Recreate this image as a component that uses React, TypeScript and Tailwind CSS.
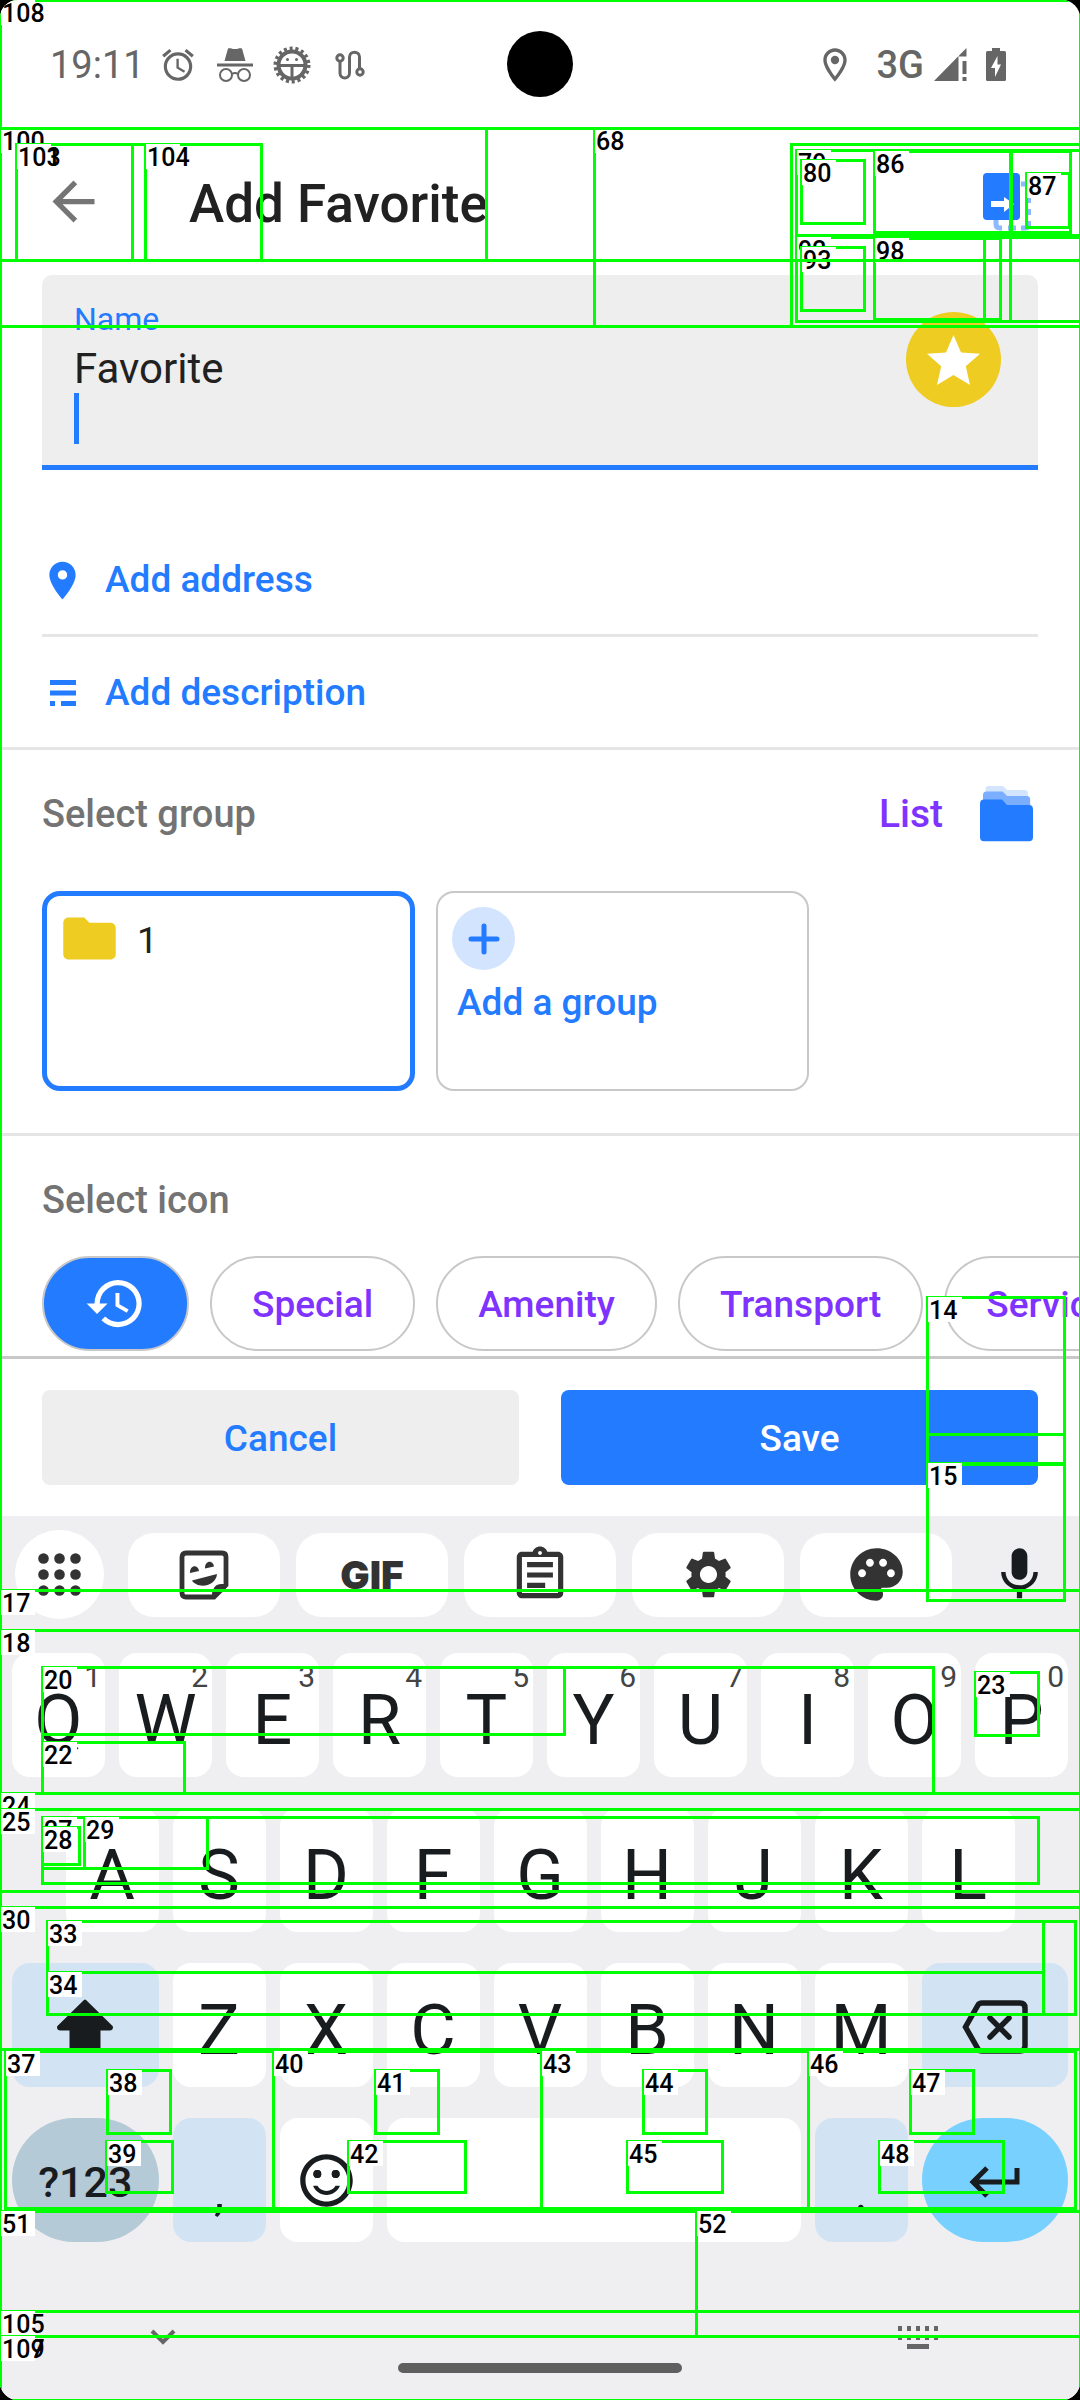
import type { ReactNode } from "react";
import {
  MdAlarm,
  MdArrowBack,
  MdFolder,
  MdHistory,
  MdLocationOn,
  MdMic,
  MdOutlineAssignment,
  MdOutlineLocationOn,
  MdPalette,
  MdSentimentSatisfiedAlt,
  MdSettings,
} from "react-icons/md";

/* ---------- icons ---------- */

function IncognitoIcon() {
  return (
    <svg width="36" height="34" viewBox="0 0 36 34" fill="none">
      <path d="M11 0.5c3-.6 4 .6 7 .6s4-1.200 7-.6L28.500 13h-21z" fill="#666" />
      <path d="M0 15.500h36v3H0z" fill="#666" />
      <circle cx="9" cy="27" r="6" stroke="#666" strokeWidth="2" />
      <circle cx="27" cy="27" r="6" stroke="#666" strokeWidth="2" />
      <path d="M15 26q3-2 6 0" stroke="#666" strokeWidth="2" />
    </svg>
  );
}

function BugIcon() {
  return (
    <svg width="38" height="38" viewBox="0 0 38 38" fill="none">
      <circle cx="19" cy="19" r="16.500" stroke="#666" strokeWidth="4" strokeDasharray="3 2.760" />
      <circle cx="19" cy="19" r="13.500" stroke="#666" strokeWidth="4" />
      <path d="M6 19.500h26M19 19.500v14" stroke="#666" strokeWidth="3" />
      <circle cx="14.500" cy="13.500" r="1.500" fill="#666" />
      <circle cx="23.500" cy="13.500" r="1.500" fill="#666" />
    </svg>
  );
}

function RouteIcon() {
  return (
    <svg width="30" height="30" viewBox="0 0 30 30" fill="none" stroke="#666" strokeWidth="3">
      <circle cx="5" cy="8" r="3.200" />
      <circle cx="25" cy="22" r="3.200" />
      <path d="M5 11.500V23c0 6.500 9.500 6.500 9.500 0V7c0-6.500 10-6.500 10 0v11.500" />
    </svg>
  );
}

function SignalIcon() {
  return (
    <svg width="34" height="34" viewBox="0 0 34 34" fill="#666">
      <path d="M0 33L24.500 8v25z" />
      <path d="M32.500 0v8.500h-7.500v-1z" />
      <path d="M28.500 13h4v13h-4zM28.500 29h4v4h-4z" />
    </svg>
  );
}

function BatteryIcon() {
  return (
    <svg width="20" height="34" viewBox="0 0 20 34">
      <path d="M6 0h8v3h4.500Q20 3 20 5v26.500q0 1.500-1.500 1.500h-17Q0 33 0 31.500V5q0-2 1.500-2H6z" fill="#666" />
      <path d="M11.500 8L5 20h4v9l6-12.500h-3.500z" fill="#fff" />
    </svg>
  );
}

function ReplaceIcon() {
  return (
    <svg width="48" height="58" viewBox="0 0 48 58" fill="none">
      <path
        d="M13 46v5q0 4 4 4h2M25 55h8M38 55h4q4 0 4-4v-3M46 42v-6M46 30v-6M46 16v-2q0-3-4-3h-4"
        stroke="#8dbaff"
        strokeWidth="5"
      />
      <rect x="0" y="0" width="37" height="47" rx="4" fill="#237bff" />
      <path d="M8 28h13v-4l10 7-10 8v-5H8z" fill="#fff" />
    </svg>
  );
}

function DescriptionIcon() {
  return (
    <svg width="26" height="26" viewBox="0 0 26 26" fill="#237bff">
      <path d="M0 0h26v5H0zM0 10.500h26v5H0zM0 21h5v5H0zM11 21h15v5H11z" />
    </svg>
  );
}

function FoldersIcon() {
  const shape = "M4 0h18l5 5h22q4 0 4 4v25q0 4-4 4H4q-4 0-4-4V4q0-4 4-4z";
  return (
    <svg width="54" height="56" viewBox="0 0 54 56">
      <path d={shape} transform="translate(5.500 0) scale(.8)" fill="#d3e4ff" />
      <path d={shape} transform="translate(3 5.500) scale(.89)" fill="#7baeff" />
      <path d={shape} transform="translate(0 13.500) scale(1 1.100)" fill="#237bff" />
    </svg>
  );
}

function PlusIcon() {
  return (
    <svg width="32" height="32" viewBox="0 0 32 32" fill="none" stroke="#237bff" strokeWidth="5" strokeLinecap="round">
      <path d="M16 3v26M3 16h26" />
    </svg>
  );
}

function DotsIcon() {
  const at = [5.500, 21.500, 37.500];
  return (
    <svg width="43" height="43" viewBox="0 0 43 43" fill="#333">
      {at.map((y) => at.map((x) => <circle key={`${x}-${y}`} cx={x} cy={y} r="5.300" />))}
    </svg>
  );
}

function StickerIcon() {
  return (
    <svg width="50" height="50" viewBox="0 0 50 50" fill="none">
      <path
        d="M7 3h36q4 0 4 4v28L35 47H7q-4 0-4-4V7q0-4 4-4z"
        stroke="#333"
        strokeWidth="4.800"
      />
      <path d="M48 34L34 48q-2-4 0-8 2-6 8-6z" fill="#333" />
      <path d="M11 23c-.5-8 8-9 9-2zM26 18.500c-.5-8 8-9 9-2z" fill="#333" />
      <path d="M13 30.500L38 24c-1 13-20 15-25 6.500z" fill="#333" />
    </svg>
  );
}

function ShiftIcon() {
  return (
    <svg width="56" height="54" viewBox="0 0 56 54" fill="#191c1e" stroke="#191c1e" strokeWidth="3" strokeLinejoin="round">
      <path d="M28 2L54.500 28q0 2-2 2H42v22H14V30H3.500q-2 0-2-2z" />
    </svg>
  );
}

function BackspaceIcon() {
  return (
    <svg width="66" height="54" viewBox="0 0 66 54" fill="none" stroke="#191c1e" strokeWidth="5.500">
      <path d="M20 3h38q5 0 5 5v38q0 5-5 5H20q-3 0-4-2L3.500 27 16 5q1-2 4-2z" />
      <path d="M28 18l19 19M47 18L28 37" strokeLinecap="round" />
    </svg>
  );
}

function EnterIcon() {
  return (
    <svg width="52" height="32" viewBox="0 0 52 32" fill="none" stroke="#191c1e" strokeWidth="5">
      <path d="M48 2v14H5M18 2L4 16l14 14" />
    </svg>
  );
}

/* ---------- form pieces ---------- */

function StatusBar() {
  return (
    <div className="relative flex h-[128px] items-center justify-between pt-[2px] pr-[74px] pl-[50px] text-[#666]">
      <div className="flex items-center">
        <span className="text-[38px] leading-[44px]">19:11</span>
        <MdAlarm className="ml-[14px] size-[38px]" />
        <span className="ml-[20px]"><IncognitoIcon /></span>
        <span className="ml-[20px]"><BugIcon /></span>
        <span className="ml-[24px]"><RouteIcon /></span>
      </div>
      <div className="absolute top-[31px] left-1/2 size-[66px] -translate-x-1/2 rounded-full bg-black" />
      <div className="flex items-center">
        <MdOutlineLocationOn className="mr-[22px] size-[40px]" />
        <span className="mr-[10px] text-[38px] leading-[44px] font-medium">3G</span>
        <SignalIcon />
        <span className="ml-[18px]"><BatteryIcon /></span>
      </div>
    </div>
  );
}

function AddRow({ icon, label }: { icon: ReactNode; label: string }) {
  return (
    <button
      type="button"
      className="flex h-[110px] w-full items-center pt-[2px] text-left text-[37px] font-medium text-[#237bff]"
    >
      <span className="flex w-[63px] justify-start pl-[8px]">{icon}</span>
      {label}
    </button>
  );
}

function Chip({ label }: { label: string }) {
  return (
    <button
      type="button"
      className="h-[95px] shrink-0 rounded-full border-2 border-[#c8c8c8] px-[40px] pt-[2px] text-[37px] font-medium text-[#7f33ff]"
    >
      {label}
    </button>
  );
}

/* ---------- keyboard ---------- */

const ROW_ONE = "QWERTYUIOP".split("");
const ROW_TWO = "ASDFGHJKL".split("");
const ROW_THREE = "ZXCVBNM".split("");

function LetterKey({ letter, hint, first }: { letter: string; hint?: number; first?: boolean }) {
  return (
    <button
      type="button"
      className={
        "relative mx-[7px] h-[124px] rounded-[18px] bg-white pt-[10px] text-[70px] leading-[82px] text-[#191c1e] " +
        (first ? "col-span-2 col-start-2" : "col-span-2")
      }
    >
      {letter}
      {hint !== undefined && (
        <span className="absolute top-[6px] right-[4px] text-[30px] leading-[36px] text-[#444]">{hint}</span>
      )}
    </button>
  );
}

function ToolKey({ label, children }: { label: string; children: ReactNode }) {
  return (
    <button
      type="button"
      aria-label={label}
      className="flex h-[84px] flex-1 items-center justify-center rounded-[26px] bg-white text-[#333]"
    >
      {children}
    </button>
  );
}

function Keyboard() {
  return (
    <div className="flex grow flex-col bg-[#efeff1] text-[#191c1e]">
      <div className="flex h-[117px] items-center pl-[15px]">
        <button
          type="button"
          aria-label="Shortcuts"
          className="mr-[24px] flex size-[89px] shrink-0 items-center justify-center rounded-full bg-white"
        >
          <DotsIcon />
        </button>
        <div className="flex grow gap-[16px]">
          <ToolKey label="Stickers"><StickerIcon /></ToolKey>
          <ToolKey label="GIF">
            <span className="font-[Inter] text-[39px] leading-[46px] font-black">GIF</span>
          </ToolKey>
          <ToolKey label="Clipboard"><MdOutlineAssignment className="size-[62px]" /></ToolKey>
          <ToolKey label="Settings"><MdSettings className="size-[57px]" /></ToolKey>
          <ToolKey label="Themes"><MdPalette className="size-[63px]" /></ToolKey>
        </div>
        <button type="button" aria-label="Voice input" className="flex w-[128px] shrink-0 justify-center pl-[6px]">
          <MdMic className="size-[63px]" />
        </button>
      </div>

      <div className="mt-[20px] grid grid-cols-20 gap-y-[31px] px-[5px]">
        {ROW_ONE.map((k, i) => (
          <LetterKey key={k} letter={k} hint={(i + 1) % 10} />
        ))}
        {ROW_TWO.map((k, i) => (
          <LetterKey key={k} letter={k} first={i === 0} />
        ))}
        <button
          type="button"
          aria-label="Shift"
          className="col-span-3 col-start-1 mx-[7px] flex h-[124px] items-center justify-center rounded-[18px] bg-[#d2e4f3] pt-[2px]"
        >
          <ShiftIcon />
        </button>
        {ROW_THREE.map((k) => (
          <LetterKey key={k} letter={k} />
        ))}
        <button
          type="button"
          aria-label="Delete"
          className="col-span-3 mx-[7px] flex h-[124px] items-center justify-center rounded-[18px] bg-[#d2e4f3] pt-[4px]"
        >
          <BackspaceIcon />
        </button>
        <button
          type="button"
          className="col-span-3 mx-[7px] h-[124px] rounded-full bg-[#b4cad6] pt-[4px] text-[43px] font-medium"
        >
          ?123
        </button>
        <button type="button" className="col-span-2 mx-[7px] h-[124px] rounded-[18px] bg-[#d2e4f3] pt-[26px] text-[52px]">
          ,
        </button>
        <button
          type="button"
          aria-label="Emoji"
          className="col-span-2 mx-[7px] flex h-[124px] items-center justify-center rounded-[18px] bg-white"
        >
          <MdSentimentSatisfiedAlt className="size-[63px]" />
        </button>
        <button type="button" aria-label="Space" className="col-span-8 mx-[7px] h-[124px] rounded-[18px] bg-white" />
        <button type="button" className="col-span-2 mx-[7px] h-[124px] rounded-[18px] bg-[#d2e4f3] pt-[26px] text-[52px]">
          .
        </button>
        <button
          type="button"
          aria-label="Enter"
          className="col-span-3 mx-[7px] flex h-[124px] items-center justify-center rounded-full bg-[#78d0ff] pt-[4px]"
        >
          <EnterIcon />
        </button>
      </div>

      <div className="mt-[84px] flex items-center justify-between pr-[142px] pl-[150px]">
        <button type="button" aria-label="Hide keyboard">
          <svg width="26" height="23" viewBox="0 0 26 23" fill="none" stroke="#666" strokeWidth="4">
            <path d="M2 5l11 11L24 5" />
          </svg>
        </button>
        <button type="button" aria-label="Switch keyboard">
          <svg width="40" height="23" viewBox="0 0 40 23" fill="none" stroke="#666" strokeWidth="5">
            <path d="M0 2.500h40M0 11.500h40" strokeDasharray="4 5" />
            <path d="M9 20.500h22" />
          </svg>
        </button>
      </div>
      <div className="mx-auto mt-[14px] mb-[26px] h-[10px] w-[284px] rounded-full bg-[#5f5f5f]" />
    </div>
  );
}

/* ---------- element bounds overlay ---------- */

type Bound = [label: string, left: number, top: number, right: number, bottom: number];

const BOUNDS: Bound[] = [
  ["", 0, 128, 1080, 2400],
  ["", 927, 1297, 1064, 1464],
  ["14", 927, 1297, 1064, 1434],
  ["15", 927, 1463, 1064, 1600],
  ["17", 0, 1590, 1080, 1630],
  ["18", 0, 1630, 1080, 1793],
  ["", 42, 1667, 933, 1793],
  ["20", 42, 1667, 564, 1734],
  ["22", 42, 1742, 184, 1793],
  ["23", 975, 1672, 1038, 1735],
  ["24", 0, 1793, 1080, 1907],
  ["25", 0, 1809, 1080, 1891],
  ["", 42, 1817, 1038, 1883],
  ["27", 42, 1817, 207, 1868],
  ["28", 42, 1827, 79, 1864],
  ["29", 84, 1817, 207, 1868],
  ["30", 0, 1907, 1080, 2049],
  ["", 47, 1921, 1075, 2014],
  ["33", 47, 1921, 1043, 2014],
  ["34", 47, 1972, 1043, 2014],
  ["", 0, 2049, 1080, 2211],
  ["37", 5, 2051, 273, 2208],
  ["38", 107, 2070, 170, 2133],
  ["39", 106, 2141, 172, 2192],
  ["40", 273, 2051, 541, 2208],
  ["41", 375, 2070, 438, 2133],
  ["42", 348, 2141, 465, 2192],
  ["43", 541, 2051, 808, 2208],
  ["44", 643, 2070, 706, 2133],
  ["45", 627, 2141, 722, 2192],
  ["46", 808, 2051, 1075, 2208],
  ["47", 910, 2070, 973, 2133],
  ["48", 879, 2141, 1003, 2192],
  ["51", 0, 2211, 696, 2336],
  ["52", 696, 2211, 1080, 2336],
  ["", 0, 128, 1080, 326],
  ["68", 594, 128, 1080, 326],
  ["", 791, 144, 1080, 326],
  ["", 796, 150, 1011, 235],
  ["79", 796, 150, 1080, 235],
  ["80", 801, 160, 864, 223],
  ["", 874, 151, 1070, 232],
  ["86", 874, 151, 1010, 232],
  ["87", 1026, 173, 1069, 227],
  ["", 796, 237, 1010, 321],
  ["92", 796, 237, 1080, 321],
  ["93", 801, 247, 864, 310],
  ["", 874, 238, 1000, 319],
  ["98", 874, 238, 984, 319],
  ["", 0, 128, 1080, 260],
  ["100", 0, 128, 486, 260],
  ["101", 16, 144, 261, 260],
  ["103", 16, 144, 132, 260],
  ["104", 145, 144, 261, 260],
  ["105", 0, 2311, 1080, 2400],
  ["107", 0, 2336, 1080, 2400],
  ["108", 0, 0, 1080, 128],
  ["109", 0, 2336, 1080, 2400],
];

function BoundsOverlay() {
  return (
    <div className="pointer-events-none absolute inset-0 overflow-hidden">
      {BOUNDS.map(([label, left, top, right, bottom], i) => (
        <div
          key={i}
          className="absolute border-3 border-[#00ff00]"
          style={{ left: left - 1, top: top - 1, width: right - left + 3, height: bottom - top + 3 }}
        >
          {label !== "" && (
            <div className="absolute -top-[2px] -left-[1px] h-[25px] w-[34px] bg-white pl-[1px] text-[25px] leading-[27px] font-medium whitespace-nowrap text-black">
              {label}
            </div>
          )}
        </div>
      ))}
    </div>
  );
}

/* ---------- screen ---------- */

export default function App() {
  return (
    <div className="bg-black font-[Roboto,sans-serif]">
      <div className="relative flex min-h-screen flex-col overflow-hidden rounded-[18px] bg-white">
        <StatusBar />

        <header className="flex h-[132px] items-center pt-[15px] pr-[49px] pl-[42px]">
          <button type="button" aria-label="Back" className="text-[#757575]">
            <MdArrowBack className="size-[63px]" />
          </button>
          <h1 className="ml-[84px] grow pt-[4px] text-[53px] leading-[60px] font-medium text-[#212121]">Add Favorite</h1>
          <button type="button" aria-label="Replace favorite">
            <ReplaceIcon />
          </button>
        </header>

        <main className="px-[42px] pt-[15px]">
          <div className="relative rounded-t-[10px] border-b-5 border-[#237bff] bg-[#eee] pt-[25px] pb-[21px] pl-[32px]">
            <label htmlFor="name" className="block text-[32px] leading-[38px] text-[#237bff]">
              Name
            </label>
            <textarea
              id="name"
              rows={2}
              defaultValue={"Favorite\n"}
              className="mt-[6px] block h-[100px] w-[800px] max-w-full resize-none overflow-hidden bg-transparent text-[42px] leading-[50px] text-[#212121] outline-none"
            />
            <span className="absolute top-[118px] left-[32px] h-[51px] w-[5px] bg-[#237bff]" />
            <button
              type="button"
              aria-label="Favorite appearance"
              className="absolute top-[37px] right-[37px] flex size-[95px] items-center justify-center rounded-full bg-[#eecc22]"
            >
              <svg width="53" height="50" viewBox="0 0 53 50" fill="#fff">
                <path d="M26.500 0L34 17.500l19 1.300L38.800 31.200 43 50 26.500 40 10 50l4.200-18.800L0 18.800l19-1.300z" />
              </svg>
            </button>
          </div>

          <div className="mt-[54px] border-b-3 border-[#e5e5e5]">
            <AddRow icon={<MdLocationOn className="-mx-[10px] size-[45px]" />} label="Add address" />
          </div>
          <AddRow icon={<DescriptionIcon />} label="Add description" />
        </main>

        <section className="border-t-3 border-[#e5e5e5] px-[42px] pb-[42px]">
          <div className="mt-[8px] flex h-[112px] items-center">
            <h2 className="grow text-[38px] font-medium text-[#737373]">Select group</h2>
            <button type="button" className="mr-[37px] text-[39px] font-medium text-[#7f33ff]">
              List
            </button>
            <button type="button" aria-label="Groups" className="mr-[4px]">
              <FoldersIcon />
            </button>
          </div>
          <div className="mt-[21px] flex gap-[21px]">
            <button
              type="button"
              className="flex h-[200px] w-[373px] items-start rounded-[18px] border-5 border-[#237bff] pt-[11px] pl-[11px] text-left text-[37px]"
            >
              <MdFolder className="size-[63px] text-[#eecc22]" />
              <span className="ml-[16px] pt-[6px] leading-[56px] text-[#212121]">1</span>
            </button>
            <button
              type="button"
              className="flex h-[200px] w-[373px] flex-col items-start rounded-[18px] border-2 border-[#c8c8c8] pt-[14px] pl-[14px] text-left text-[37px] font-medium text-[#237bff]"
            >
              <span className="flex size-[63px] items-center justify-center rounded-full bg-[#d3e4ff]">
                <PlusIcon />
              </span>
              <span className="mt-[11px] ml-[5px] leading-[44px]">Add a group</span>
            </button>
          </div>
        </section>

        <section className="border-t-3 border-[#e5e5e5] pb-[5px] pl-[42px]">
          <h2 className="mt-[8px] text-[38px] leading-[112px] font-medium text-[#737373]">Select icon</h2>
          <div className="flex gap-[21px] overflow-hidden">
            <button
              type="button"
              aria-label="Last used"
              className="flex h-[95px] w-[147px] shrink-0 items-center justify-center rounded-full border-2 border-[#c8c8c8] bg-[#237bff] text-white"
            >
              <MdHistory className="size-[63px]" />
            </button>
            <Chip label="Special" />
            <Chip label="Amenity" />
            <Chip label="Transport" />
            <Chip label="Service" />
          </div>
        </section>

        <div className="flex gap-[42px] border-t-3 border-[#c8c8c8] px-[42px] py-[31px] text-[37px] font-medium">
          <button type="button" className="h-[95px] flex-1 rounded-[8px] bg-[#eee] pt-[3px] text-[#237bff]">
            Cancel
          </button>
          <button type="button" className="h-[95px] flex-1 rounded-[8px] bg-[#237bff] pt-[3px] text-white">
            Save
          </button>
        </div>

        <Keyboard />
        <BoundsOverlay />
      </div>
    </div>
  );
}
